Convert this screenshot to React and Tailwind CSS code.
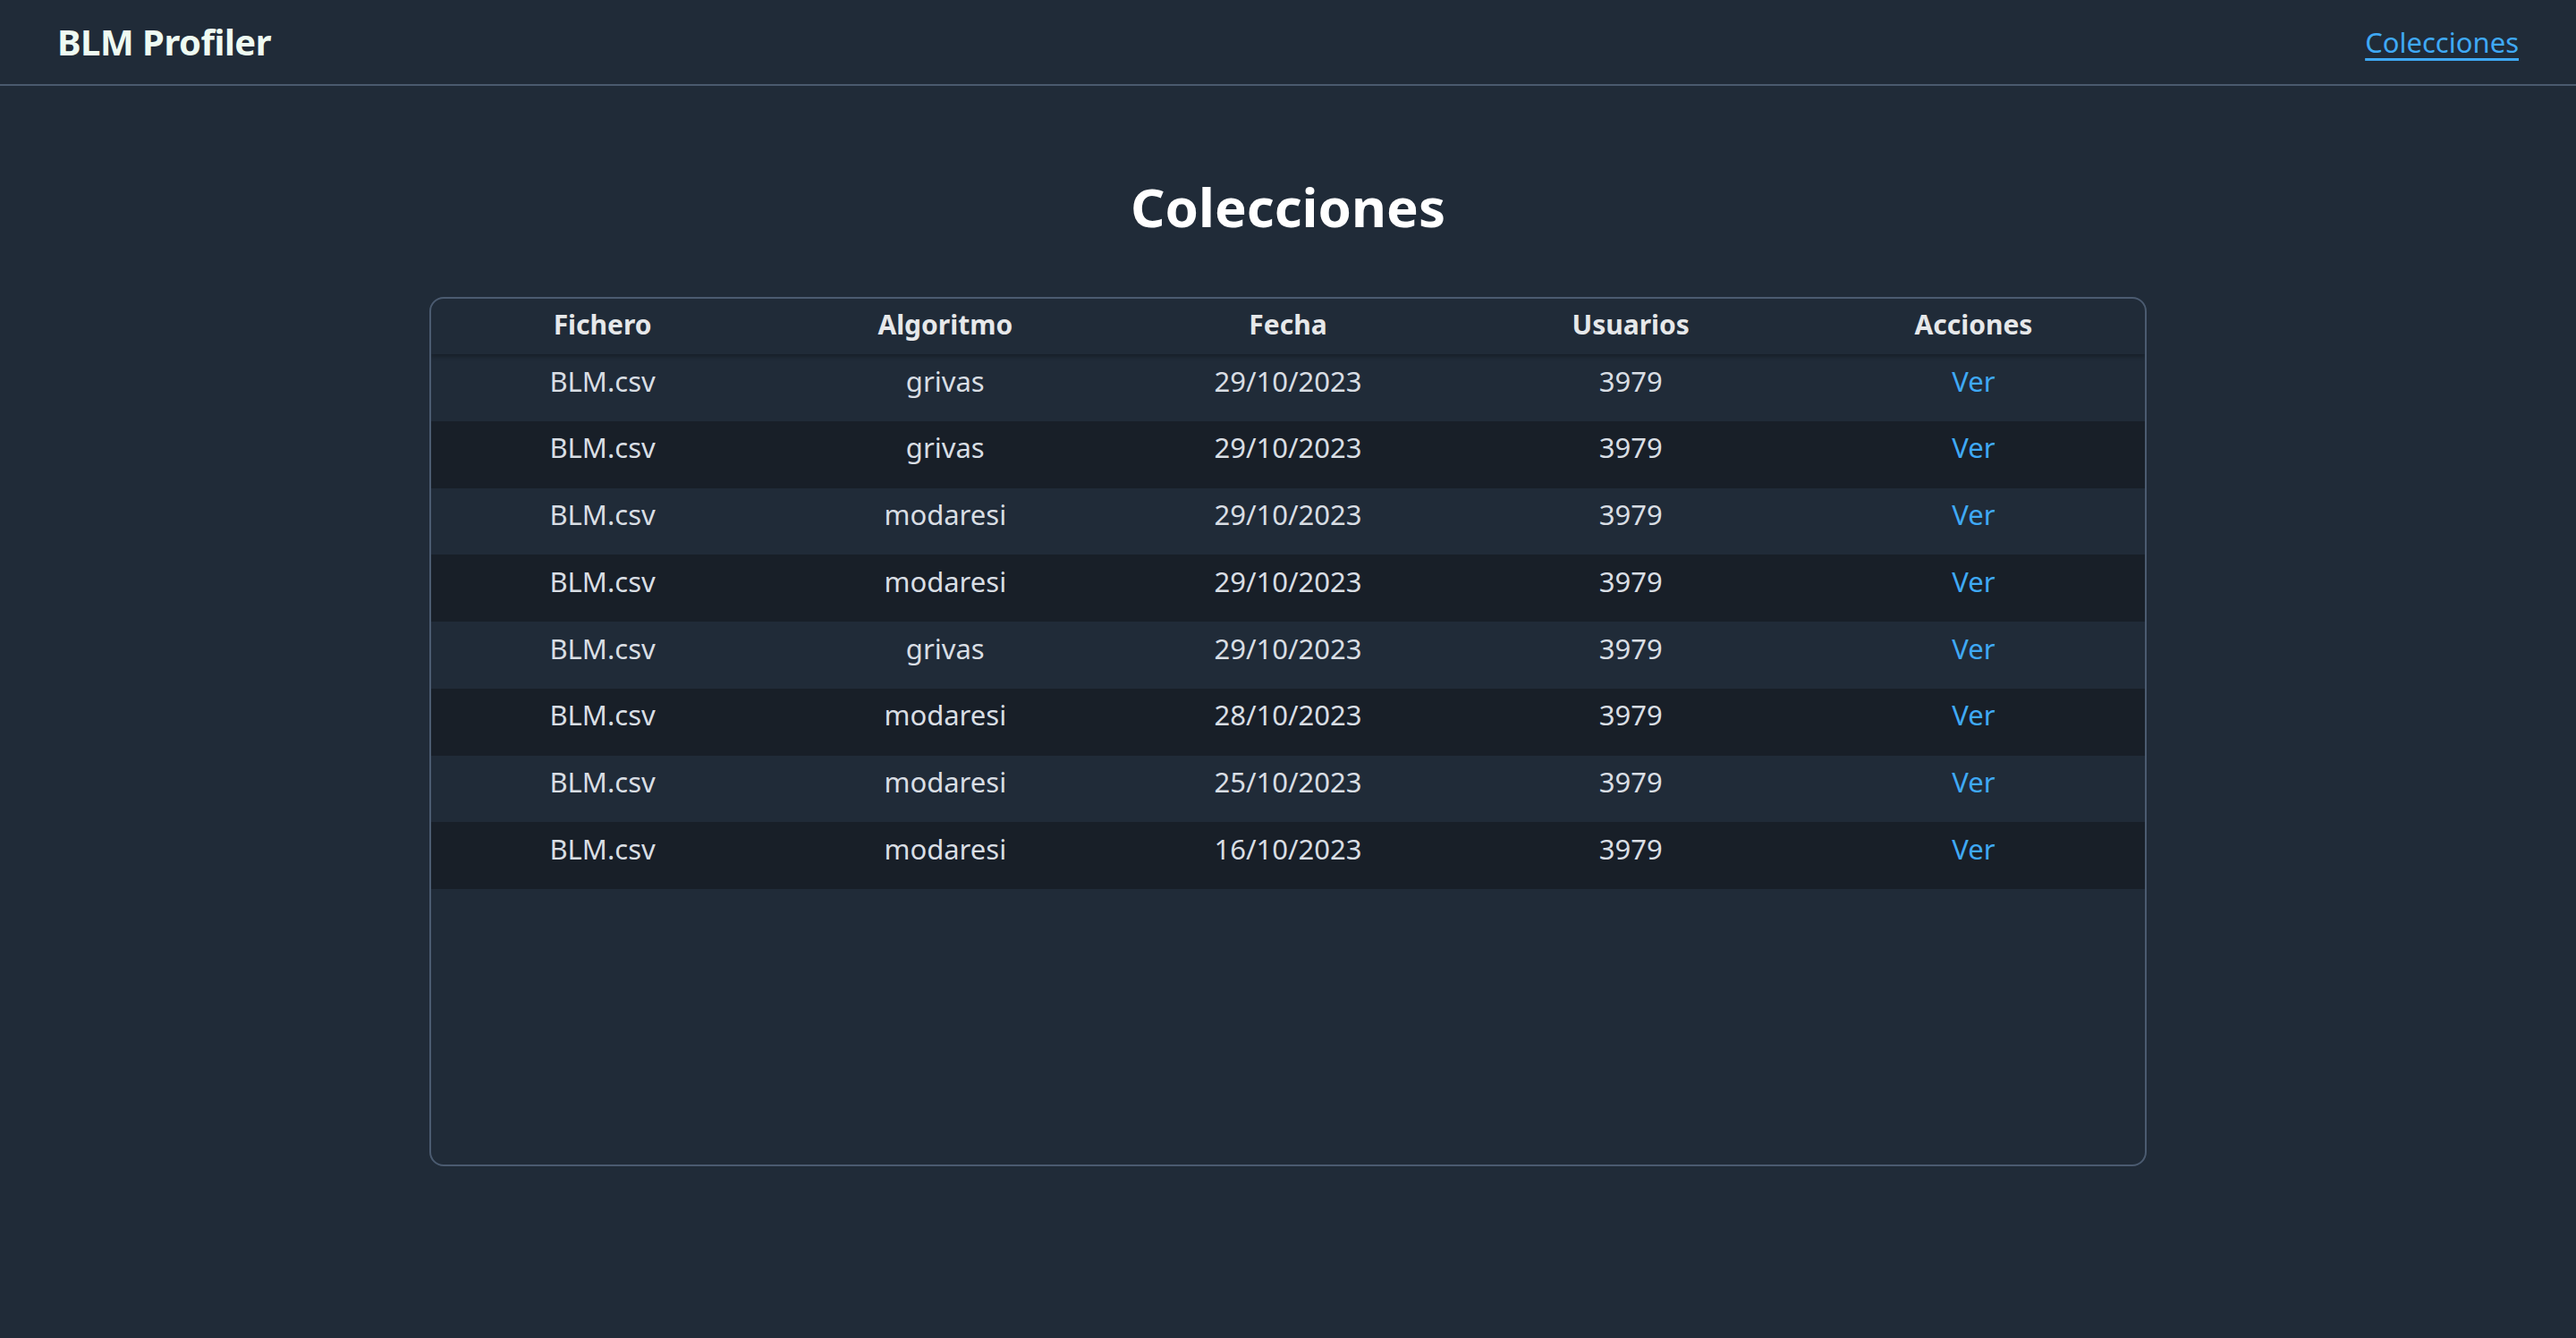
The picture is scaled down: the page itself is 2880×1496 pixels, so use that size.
import React from "react";

const rows = [
  ["BLM.csv", "grivas", "29/10/2023", "3979"],
  ["BLM.csv", "grivas", "29/10/2023", "3979"],
  ["BLM.csv", "modaresi", "29/10/2023", "3979"],
  ["BLM.csv", "modaresi", "29/10/2023", "3979"],
  ["BLM.csv", "grivas", "29/10/2023", "3979"],
  ["BLM.csv", "modaresi", "28/10/2023", "3979"],
  ["BLM.csv", "modaresi", "25/10/2023", "3979"],
  ["BLM.csv", "modaresi", "16/10/2023", "3979"],
];

export default function App() {
  return (
    <div className="min-h-[1496px] bg-[#202b38] font-['Noto_Sans',sans-serif] text-[#d9dee4]">
      <nav className="h-[96px] border-b-2 border-[#4a5a6e] flex items-center justify-between px-[64px]">
        <div className="text-[40px] font-bold text-[#eefaf2] tracking-[-0.5px]">BLM Profiler</div>
        <a href="#" className="text-[31px] text-[#3fa9f5] underline underline-offset-[6px]">Colecciones</a>
      </nav>
      <main className="flex flex-col items-center pt-[97px]">
        <h1 className="text-[60px] leading-[76px] font-bold text-white">Colecciones</h1>
        <div className="mt-[63px] w-[1920px] h-[972px] border-2 border-[#4b5b70] rounded-[16px] overflow-hidden">
          <div className="grid grid-cols-5 h-[62px] items-center pb-[6px] text-[30px] font-bold text-[#e6e8ea] shadow-[0_3px_4px_rgba(0,0,0,0.25)] relative">
            <div className="text-center">Fichero</div>
            <div className="text-center">Algoritmo</div>
            <div className="text-center">Fecha</div>
            <div className="text-center">Usuarios</div>
            <div className="text-center">Acciones</div>
          </div>
          {rows.map((r, i) => (
            <div
              key={i}
              className={`grid grid-cols-5 h-[74.75px] items-center pb-[15px] text-[31px] ${i % 2 === 1 ? "bg-[#181f28]" : "bg-[#202b38]"}`}
            >
              <div className="text-center">{r[0]}</div>
              <div className="text-center">{r[1]}</div>
              <div className="text-center">{r[2]}</div>
              <div className="text-center">{r[3]}</div>
              <div className="text-center">
                <a href="#" className="text-[#3fa9f5]">Ver</a>
              </div>
            </div>
          ))}
        </div>
      </main>
    </div>
  );
}
